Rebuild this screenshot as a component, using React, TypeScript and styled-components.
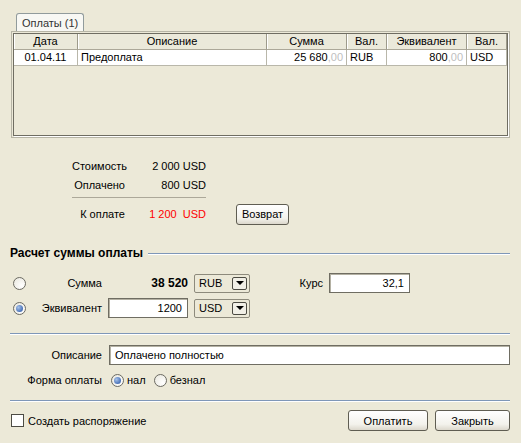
import React from "react";
import styled, { createGlobalStyle } from "styled-components";

const GlobalStyle = createGlobalStyle`
  html, body {
    margin: 0;
    padding: 0;
    background: #ece9d8;
  }
  body {
    font-family: "Liberation Sans", Arial, sans-serif;
    font-size: 11px;
    color: #000;
  }
`;

const Window = styled.div`
  width: 521px;
  height: 443px;
  box-sizing: border-box;
  padding: 13px 11px 0 10px;
  background: #ece9d8;
  display: flex;
  flex-direction: column;
`;

const TabStrip = styled.div`
  display: flex;
  padding-left: 6px;
  height: 18px;
`;

const Tab = styled.div`
  height: 18px;
  box-sizing: border-box;
  padding: 3px 5px 0 5px;
  border: 1px solid #919b9c;
  border-bottom: none;
  border-radius: 3px 3px 0 0;
  background: #f8f8f4;
  color: #333;
  position: relative;
  z-index: 1;
  margin-bottom: -1px;
`;

const TabPanel = styled.div`
  margin-left: 1px;
  height: 107px;
  box-sizing: border-box;
  border: 1px solid #b7b5a6;
  padding: 1px;
  background: #ece9d8;
`;

const Grid = styled.div`
  height: 103px;
  box-sizing: border-box;
  border: 1px solid #6f6d62;
  box-shadow: 1px 1px 0 #fff;
  display: grid;
  grid-template-columns: 64px 189px 80px 40px 80px 1fr;
  grid-auto-rows: 16px;
  align-content: start;
  background: #ece9d8;
`;

const HeadCell = styled.div`
  box-sizing: border-box;
  border-right: 1px solid #9d9a8a;
  border-bottom: 1px solid #aca899;
  box-shadow: inset 1px 0 0 #fff;
  text-align: center;
  line-height: 15px;
  background: #ebe9da;
  white-space: nowrap;
`;

const Cell = styled.div<{ $align?: string }>`
  box-sizing: border-box;
  background: #fff;
  border-right: 1px solid #b9b7aa;
  border-bottom: 1px solid #b9b7aa;
  padding: 0 3px;
  line-height: 15px;
  text-align: ${(p) => p.$align || "left"};
  white-space: nowrap;
`;

const Cents = styled.span`
  color: #c0c0c0;
`;

const Summary = styled.div`
  margin-top: 18px;
  padding-left: 62px;
  display: grid;
  grid-template-columns: 53px 81px auto;
  grid-template-rows: 19px 19px 10px 20px;
  align-items: center;
`;

const SumLabel = styled.div`
  text-align: right;
  white-space: nowrap;
`;

const SumValue = styled.div<{ $red?: boolean }>`
  text-align: right;
  white-space: nowrap;
  color: ${(p) => (p.$red ? "#ff0000" : "#000")};
`;

const SumRule = styled.div`
  grid-column: 1 / 3;
  height: 1px;
  background: #aca899;
  align-self: start;
  margin-top: 3px;
`;

const ReturnCell = styled.div`
  padding-left: 30px;
`;

const XpButton = styled.button<{ $w: number }>`
  width: ${(p) => p.$w}px;
  height: 21px;
  box-sizing: border-box;
  border: 1px solid #5f5d52;
  border-radius: 3px;
  background: linear-gradient(#ffffff, #f3f2ec 70%, #dcd8cc);
  font-family: inherit;
  font-size: 11px;
  color: #000;
  padding: 0;
`;

const SectionTitle = styled.div`
  margin-top: 21px;
  display: flex;
  align-items: center;
  gap: 5px;
  height: 16px;
  font-weight: bold;
  font-size: 12px;
  white-space: nowrap;
`;

const TitleLine = styled.div`
  flex: 1;
  height: 1px;
  background: #7f97b8;
  box-shadow: 0 1px 0 #fff;
`;

const CalcGrid = styled.div`
  margin-top: 12px;
  padding-left: 3px;
  display: grid;
  grid-template-columns: 13px 70px 80px 56px 67px 81px;
  column-gap: 6px;
  row-gap: 5px;
  grid-auto-rows: 20px;
  align-items: center;
`;

const FieldLabel = styled.div`
  text-align: right;
  white-space: nowrap;
`;

const BoldValue = styled.div`
  text-align: right;
  font-weight: bold;
  font-size: 12px;
`;

const TextBox = styled.div<{ $align?: string }>`
  height: 20px;
  box-sizing: border-box;
  border: 1px solid #6f6d62;
  box-shadow: inset 1px 1px 0 #b4b1a3;
  background: #fff;
  padding: 0 5px;
  line-height: 18px;
  text-align: ${(p) => p.$align || "left"};
  white-space: nowrap;
`;

const Combo = styled.div`
  height: 19px;
  box-sizing: border-box;
  border: 1px solid #8d8a7c;
  border-radius: 2px;
  display: flex;
  align-items: center;
  justify-content: space-between;
  padding: 0 2px 0 4px;
`;

const DropBtn = styled.div`
  width: 15px;
  height: 13px;
  box-sizing: border-box;
  border: 1px solid #4b4a42;
  border-radius: 2px;
  background: #f1efe6;
  display: flex;
  align-items: center;
  justify-content: center;
`;

const Arrow = styled.div`
  width: 0;
  height: 0;
  border-left: 4px solid transparent;
  border-right: 4px solid transparent;
  border-top: 4px solid #000;
`;

const Radio = styled.span<{ $on?: boolean }>`
  display: inline-flex;
  width: 13px;
  height: 13px;
  box-sizing: border-box;
  border-radius: 50%;
  border: 1px solid #6b6a62;
  background: radial-gradient(circle at 70% 70%, #ffffff, #e8e6dc);
  align-items: center;
  justify-content: center;
  flex: none;
  &::after {
    content: "";
    display: ${(p) => (p.$on ? "block" : "none")};
    width: 7px;
    height: 7px;
    border-radius: 50%;
    background: radial-gradient(circle at 35% 35%, #a6c2ea, #4a72b8 70%, #33599a);
  }
`;

const Divider = styled.div<{ $top: number }>`
  margin-top: ${(p) => p.$top}px;
  height: 1px;
  background: #7f97b8;
  box-shadow: 0 1px 0 #fff;
`;

const DescGrid = styled.div`
  margin-top: 11px;
  display: grid;
  grid-template-columns: 92px 1fr;
  column-gap: 7px;
  grid-template-rows: 20px 20px;
  row-gap: 5px;
  align-items: center;
`;

const RadioGroup = styled.div`
  display: flex;
  align-items: center;
  padding-left: 2px;
`;

const RadioItem = styled.label`
  display: flex;
  align-items: center;
  gap: 3px;
  margin-right: 8px;
`;

const Footer = styled.div`
  margin-top: 9px;
  display: flex;
  align-items: center;
  justify-content: space-between;
`;

const CheckRow = styled.label`
  display: flex;
  align-items: center;
  gap: 4px;
  padding-left: 1px;
`;

const CheckBox = styled.span`
  width: 13px;
  height: 13px;
  box-sizing: border-box;
  border: 1px solid #4d4c44;
  background: #fff;
`;

const Buttons = styled.div`
  display: flex;
  gap: 7px;
`;

function Select({ value }: { value: string }) {
  return (
    <Combo>
      <span>{value}</span>
      <DropBtn>
        <Arrow />
      </DropBtn>
    </Combo>
  );
}

export default function App() {
  return (
    <>
      <GlobalStyle />
      <Window>
        <TabStrip>
          <Tab>Оплаты (1)</Tab>
        </TabStrip>
        <TabPanel>
          <Grid>
            <HeadCell>Дата</HeadCell>
            <HeadCell>Описание</HeadCell>
            <HeadCell>Сумма</HeadCell>
            <HeadCell>Вал.</HeadCell>
            <HeadCell>Эквивалент</HeadCell>
            <HeadCell>Вал.</HeadCell>
            <Cell $align="center">01.04.11</Cell>
            <Cell>Предоплата</Cell>
            <Cell $align="right">
              25 680<Cents>,00</Cents>
            </Cell>
            <Cell>RUB</Cell>
            <Cell $align="right">
              800<Cents>,00</Cents>
            </Cell>
            <Cell>USD</Cell>
          </Grid>
        </TabPanel>

        <Summary>
          <SumLabel>Стоимость</SumLabel>
          <SumValue>2 000 USD</SumValue>
          <span />
          <SumLabel>Оплачено</SumLabel>
          <SumValue>800 USD</SumValue>
          <span />
          <SumRule />
          <span />
          <SumLabel>К оплате</SumLabel>
          <SumValue $red>1 200&nbsp; USD</SumValue>
          <ReturnCell>
            <XpButton $w={53}>Возврат</XpButton>
          </ReturnCell>
        </Summary>

        <SectionTitle>
          Расчет суммы оплаты
          <TitleLine />
        </SectionTitle>

        <CalcGrid>
          <Radio />
          <FieldLabel>Сумма</FieldLabel>
          <BoldValue>38 520</BoldValue>
          <Select value="RUB" />
          <FieldLabel>Курс</FieldLabel>
          <TextBox $align="right">32,1</TextBox>
          <Radio $on />
          <FieldLabel>Эквивалент</FieldLabel>
          <TextBox $align="right">1200</TextBox>
          <Select value="USD" />
        </CalcGrid>

        <Divider $top={15} />

        <DescGrid>
          <FieldLabel>Описание</FieldLabel>
          <TextBox>Оплачено полностью</TextBox>
          <FieldLabel>Форма оплаты</FieldLabel>
          <RadioGroup>
            <RadioItem>
              <Radio $on />
              нал
            </RadioItem>
            <RadioItem>
              <Radio />
              безнал
            </RadioItem>
          </RadioGroup>
        </DescGrid>

        <Divider $top={10} />

        <Footer>
          <CheckRow>
            <CheckBox />
            Создать распоряжение
          </CheckRow>
          <Buttons>
            <XpButton $w={80}>Оплатить</XpButton>
            <XpButton $w={75}>Закрыть</XpButton>
          </Buttons>
        </Footer>
      </Window>
    </>
  );
}
